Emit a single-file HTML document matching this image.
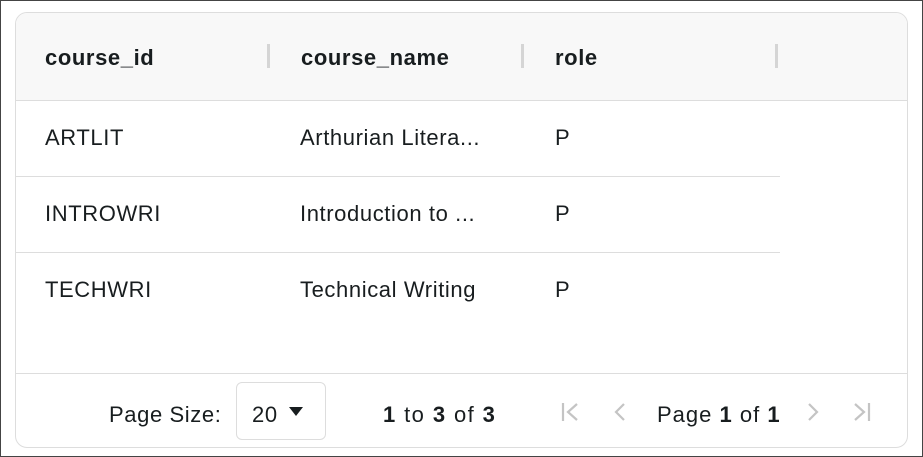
<!DOCTYPE html>
<html><head><style>
body{margin:0;width:923px;height:457px;overflow:hidden;background:#fff;font-family:"Liberation Sans",sans-serif;color:#181d1f;letter-spacing:0.6px}
.frame{position:absolute;left:0;top:0;width:921px;height:455px;border:1px solid #444}
.grid{position:absolute;left:15px;top:12px;width:891px;height:434px;border:1px solid #ddd;border-radius:12px;overflow:hidden}
.hdr{position:absolute;left:0;top:0;width:891px;height:87px;background:#f8f8f8;border-bottom:1px solid #ddd}
.h{position:absolute;top:32px;font-size:22px;font-weight:bold}
.sep{position:absolute;top:31px;width:3px;height:24px;background:#d5d5d5}
.row{position:absolute;left:0;width:764px;height:75px;border-bottom:1px solid #ddd}
.c{position:absolute;font-size:22px;top:24px}
.foot{position:absolute;left:0;top:360px;width:891px;height:74px;border-top:1px solid #ddd;font-size:22px}
.sel{position:absolute;left:220px;top:8px;width:90px;height:58px;border:1px solid #ddd;border-radius:6px;box-sizing:border-box}
.g{position:absolute;color:#c4c4c4;top:24px}
</style></head><body>
<div class="frame"></div>
<div class="grid">
 <div class="hdr">
  <div class="h" style="left:29px">course_id</div><div class="sep" style="left:251px"></div>
  <div class="h" style="left:285px">course_name</div><div class="sep" style="left:505px"></div>
  <div class="h" style="left:539px">role</div><div class="sep" style="left:759px"></div>
 </div>
 <div class="row" style="top:88px"><div class="c" style="left:29px">ARTLIT</div><div class="c" style="left:284px">Arthurian Litera...</div><div class="c" style="left:539px">P</div></div>
 <div class="row" style="top:164px"><div class="c" style="left:29px">INTROWRI</div><div class="c" style="left:284px">Introduction to ...</div><div class="c" style="left:539px">P</div></div>
 <div class="row" style="top:240px;border-bottom:none"><div class="c" style="left:29px">TECHWRI</div><div class="c" style="left:284px">Technical Writing</div><div class="c" style="left:539px">P</div></div>
 <div class="foot">
  <div style="position:absolute;left:93px;top:28px">Page Size:</div>
  <div class="sel"><span style="position:absolute;left:15px;top:19px">20</span>
   <svg style="position:absolute;left:52px;top:24px" width="14" height="9"><path d="M0 0h14L7 9z" fill="#181d1f"/></svg></div>
  <div style="position:absolute;left:367px;top:28px;letter-spacing:1.4px"><b>1</b> to <b>3</b> of <b>3</b></div>
  <svg class="g" style="left:545px;top:28px" width="20" height="20" fill="none" stroke="#c4c4c4" stroke-width="2.2"><path d="M2 1v18M16 2L7 10l9 8"/></svg>
  <svg class="g" style="left:597px;top:28px" width="14" height="20" fill="none" stroke="#c4c4c4" stroke-width="2.2"><path d="M11 2L3 10l8 8"/></svg>
  <div style="position:absolute;left:641px;top:28px;letter-spacing:1px">Page <b>1</b> of <b>1</b></div>
  <svg class="g" style="left:790px;top:28px" width="14" height="20" fill="none" stroke="#c4c4c4" stroke-width="2.2"><path d="M3 2l8 8-8 8"/></svg>
  <svg class="g" style="left:837px;top:28px" width="20" height="20" fill="none" stroke="#c4c4c4" stroke-width="2.2"><path d="M2 2l9 8-9 8M16 1v18"/></svg>
 </div>
</div>
</body></html>
